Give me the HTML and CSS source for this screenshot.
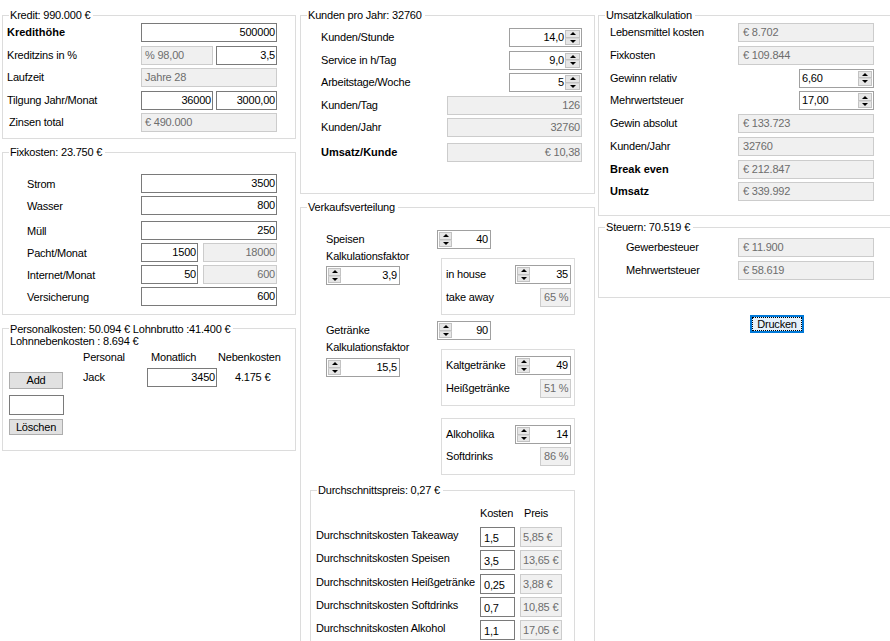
FILE: index.html
```html
<!DOCTYPE html>
<html lang="de">
<head>
<meta charset="utf-8">
<title>Kalkulation</title>
<link rel="stylesheet" href="styles.css">
</head>
<body>
<div class="app">
  <div class="col col1">
    <div class="group g-kredit">
      <span class="legend">Kredit: 990.000 €</span>
      <div class="row"><span class="lbl b">Kredithöhe</span><div class="tb full r">500000</div></div>
      <div class="row"><span class="lbl">Kreditzins in %</span><div class="tb dis s1">% 98,00</div><div class="tb r s2">3,5</div></div>
      <div class="row"><span class="lbl">Laufzeit</span><div class="tb dis full">Jahre 28</div></div>
      <div class="row"><span class="lbl">Tilgung Jahr/Monat</span><div class="tb r s1">36000</div><div class="tb r s2">3000,00</div></div>
      <div class="row"><span class="lbl ind">Zinsen total</span><div class="tb dis full">€ 490.000</div></div>
    </div>

    <div class="group g-fix">
      <span class="legend">Fixkosten: 23.750 €</span>
      <div class="row"><span class="lbl">Strom</span><div class="tb full r">3500</div></div>
      <div class="row"><span class="lbl">Wasser</span><div class="tb full r">800</div></div>
      <div class="row gap-more"><span class="lbl">Müll</span><div class="tb full r">250</div></div>
      <div class="row"><span class="lbl">Pacht/Monat</span><div class="tb r s1">1500</div><div class="tb dis r s2">18000</div></div>
      <div class="row"><span class="lbl">Internet/Monat</span><div class="tb r s1">50</div><div class="tb dis r s2">600</div></div>
      <div class="row"><span class="lbl">Versicherung</span><div class="tb full r">600</div></div>
    </div>

    <div class="group g-pers">
      <span class="legend two">Personalkosten: 50.094 € Lohnbrutto :41.400 €<br>Lohnnebenkosten : 8.694 €</span>
      <div class="pers-head"><span class="ph1">Personal</span><span class="ph2">Monatlich</span><span>Nebenkosten</span></div>
      <div class="pers-body">
        <div class="pers-ctrl">
          <div class="btn add">Add</div>
          <div class="tb empty"></div>
          <div class="btn del">Löschen</div>
        </div>
        <div class="row pers-row"><span class="lbl">Jack</span><div class="tb r">3450</div><span class="lbl neb">4.175 €</span></div>
      </div>
    </div>
  </div>

  <div class="col col2">
    <div class="group g-kunden">
      <span class="legend">Kunden pro Jahr: 32760</span>
      <div class="row"><span class="lbl wide">Kunden/Stunde</span><div class="ud"><span class="v">14,0</span><span class="spin"><i></i><i></i></span></div></div>
      <div class="row"><span class="lbl wide">Service in h/Tag</span><div class="ud"><span class="v">9,0</span><span class="spin"><i></i><i></i></span></div></div>
      <div class="row"><span class="lbl wide">Arbeitstage/Woche</span><div class="ud"><span class="v">5</span><span class="spin"><i></i><i></i></span></div></div>
      <div class="row"><span class="lbl">Kunden/Tag</span><div class="tb dis r">126</div></div>
      <div class="row"><span class="lbl">Kunden/Jahr</span><div class="tb dis r">32760</div></div>
      <div class="row last"><span class="lbl b">Umsatz/Kunde</span><div class="tb dis r">€ 10,38</div></div>
    </div>

    <div class="group g-verkauf">
      <span class="legend">Verkaufsverteilung</span>
      <div class="vk">
        <div class="row vk-main"><span class="lbl">Speisen</span><div class="ud lsp"><span class="v">40</span><span class="spin"><i></i><i></i></span></div></div>
        <div class="vk-pair">
          <div class="vk-left">
            <span class="lbl">Kalkulationsfaktor</span>
            <div class="ud lsp"><span class="v">3,9</span><span class="spin"><i></i><i></i></span></div>
          </div>
          <div class="panel">
            <div class="row"><span class="lbl">in house</span><div class="ud lsp"><span class="v">35</span><span class="spin"><i></i><i></i></span></div></div>
            <div class="row"><span class="lbl lp">take away</span><div class="tb dis r pct">65 %</div></div>
          </div>
        </div>

        <div class="row vk-main sec2"><span class="lbl">Getränke</span><div class="ud lsp"><span class="v">90</span><span class="spin"><i></i><i></i></span></div></div>
        <div class="vk-pair">
          <div class="vk-left k2">
            <span class="lbl">Kalkulationsfaktor</span>
            <div class="ud lsp"><span class="v">15,5</span><span class="spin"><i></i><i></i></span></div>
          </div>
          <div class="panel">
            <div class="row"><span class="lbl">Kaltgetränke</span><div class="ud lsp"><span class="v">49</span><span class="spin"><i></i><i></i></span></div></div>
            <div class="row"><span class="lbl lp">Heißgetränke</span><div class="tb dis r pct">51 %</div></div>
          </div>
        </div>
        <div class="panel solo">
          <div class="row"><span class="lbl">Alkoholika</span><div class="ud lsp"><span class="v">14</span><span class="spin"><i></i><i></i></span></div></div>
          <div class="row"><span class="lbl lp">Softdrinks</span><div class="tb dis r pct">86 %</div></div>
        </div>
      </div>

      <div class="group g-durch">
        <span class="legend">Durchschnittspreis: 0,27 €</span>
        <div class="dp-head"><span class="hk">Kosten</span><span>Preis</span></div>
        <div class="row dp"><span class="lbl">Durchschnitskosten Takeaway</span><div class="tb k">1,5</div><div class="tb dis p">5,85 €</div></div>
        <div class="row dp"><span class="lbl">Durchschnitskosten Speisen</span><div class="tb k">3,5</div><div class="tb dis p">13,65 €</div></div>
        <div class="row dp"><span class="lbl">Durchschnitskosten Heißgetränke</span><div class="tb k">0,25</div><div class="tb dis p">3,88 €</div></div>
        <div class="row dp"><span class="lbl">Durchschnitskosten Softdrinks</span><div class="tb k">0,7</div><div class="tb dis p">10,85 €</div></div>
        <div class="row dp"><span class="lbl">Durchschnitskosten Alkohol</span><div class="tb k">1,1</div><div class="tb dis p">17,05 €</div></div>
      </div>
    </div>
  </div>

  <div class="col col3">
    <div class="group g-umsatz">
      <span class="legend">Umsatzkalkulation</span>
      <div class="row"><span class="lbl">Lebensmittel kosten</span><div class="tb dis">€ 8.702</div></div>
      <div class="row"><span class="lbl">Fixkosten</span><div class="tb dis">€ 109.844</div></div>
      <div class="row"><span class="lbl wide">Gewinn relativ</span><div class="ud lt"><span class="v">6,60</span><span class="spin"><i></i><i></i></span></div></div>
      <div class="row"><span class="lbl wide">Mehrwertsteuer</span><div class="ud lt"><span class="v">17,00</span><span class="spin"><i></i><i></i></span></div></div>
      <div class="row"><span class="lbl">Gewin absolut</span><div class="tb dis">€ 133.723</div></div>
      <div class="row"><span class="lbl">Kunden/Jahr</span><div class="tb dis">32760</div></div>
      <div class="row"><span class="lbl b">Break even</span><div class="tb dis">€ 212.847</div></div>
      <div class="row"><span class="lbl b">Umsatz</span><div class="tb dis">€ 339.992</div></div>
    </div>

    <div class="group g-steuer">
      <span class="legend">Steuern: 70.519 €</span>
      <div class="row"><span class="lbl">Gewerbesteuer</span><div class="tb dis">€ 11.900</div></div>
      <div class="row"><span class="lbl">Mehrwertsteuer</span><div class="tb dis">€ 58.619</div></div>
    </div>

    <div class="btn-print"><span class="focus">Drucken</span></div>
  </div>
</div>
</body>
</html>
```

FILE: styles.css
```css
* { box-sizing: border-box; }
html, body { margin: 0; padding: 0; }
html { overflow: hidden; }
body {
  width: 890px;
  height: 641px;
  overflow: hidden;
  background: #fff;
  color: #000;
  font-family: "Liberation Sans", Arial, sans-serif;
  font-size: 11px;
  letter-spacing: -0.2px;
}

.app { display: flex; align-items: flex-start; }
.col { display: flex; flex-direction: column; align-items: flex-start; flex: none; }
.col1 { margin-left: 2px; width: 294px; }
.col2 { margin-left: 4px; width: 295px; }
.col3 { margin-left: 3px; width: 292px; }

/* group boxes */
.group {
  position: relative;
  flex: none;
  width: 100%;
  border: 1px solid #dcdcdc;
  display: flex;
  flex-direction: column;
  align-items: flex-start;
}
.col3 .group { border-right: 0; }
.legend {
  position: absolute;
  top: -7px;
  left: 6px;
  padding: 0 3px 0 1px;
  background: #fff;
  line-height: 13px;
  white-space: nowrap;
}
.legend.two { top: -6px; line-height: 12px; }

/* generic controls */
.row { display: flex; align-items: center; height: 19px; flex: none; }
.lbl { flex: none; line-height: 13px; white-space: nowrap; }
.b { font-weight: bold; letter-spacing: 0; }

.tb {
  flex: none;
  height: 19px;
  border: 1px solid #7a7a7a;
  background: #fff;
  padding: 0 1px 0 3px;
  line-height: 17px;
  white-space: nowrap;
  overflow: hidden;
}
.tb.r { text-align: right; }
.tb.dis { background: #f0f0f0; border-color: #cccccc; color: #6d6d6d; }

.ud {
  flex: none;
  display: flex;
  height: 19px;
  border: 1px solid #a0a0a0;
  background: #fff;
}
.ud .v { flex: 1; text-align: right; line-height: 17px; padding-right: 1px; white-space: nowrap; }
.spin {
  flex: none;
  width: 15px;
  margin: 1px 1px 1px 0;
  display: flex;
  flex-direction: column;
}
.spin i {
  flex: 1;
  display: flex;
  align-items: center;
  justify-content: center;
  background: #e6e6e6;
  border: 1px solid #c2c2c2;
}
.spin i + i { border-top-color: #d6d6d6; }
.spin i:first-child::after {
  content: "";
  border-left: 3px solid transparent;
  border-right: 3px solid transparent;
  border-bottom: 3px solid #000;
}
.spin i:last-child::after {
  content: "";
  border-left: 3px solid transparent;
  border-right: 3px solid transparent;
  border-top: 3px solid #000;
}
.ud.lsp .spin { order: -1; width: 13px; margin: 1px 0 1px 1px; }
.ud.lsp .v { padding-right: 2px; }
.ud.lt .v { text-align: left; padding-left: 2px; }
.ud.lt .spin { width: 14px; }

.btn {
  flex: none;
  width: 54px;
  height: 17px;
  background: #e1e1e1;
  border: 1px solid #adadad;
  text-align: center;
  line-height: 15px;
}

/* Kredit */
.g-kredit { margin-top: 15px; height: 124px; padding: 7px 0 0 4px; gap: 3.5px; }
.g-kredit .lbl { width: 134px; }
.g-kredit .lbl.ind { padding-left: 2px; }
.full { width: 136px; }
.g-kredit .s1 { width: 72px; }
.g-kredit .s2 { width: 61px; margin-left: 3px; }

/* Fixkosten */
.g-fix { margin-top: 13px; height: 163px; padding: 21px 0 0 24px; gap: 3px; }
.g-fix .lbl { width: 114px; padding-top: 2px; }
.g-fix .gap-more { margin-top: 3px; }
.g-fix .s1 { width: 57px; }
.g-fix .s2 { width: 74px; margin-left: 5px; }

/* Personal */
.g-pers { margin-top: 13px; height: 123px; padding-top: 22px; }
.pers-head { display: flex; padding-left: 80px; line-height: 13px; white-space: nowrap; }
.pers-head .ph1 { width: 68px; }
.pers-head .ph2 { width: 67px; }
.pers-body { display: flex; align-items: flex-start; margin-top: 4px; padding-left: 6px; }
.pers-ctrl { width: 56px; display: flex; flex-direction: column; align-items: flex-start; }
.pers-ctrl .add { margin-top: 4px; }
.pers-ctrl .empty { margin-top: 6px; width: 55px; height: 20px; }
.pers-ctrl .del { margin-top: 4px; height: 16px; line-height: 14px; }
.pers-row { margin-left: 18px; }
.pers-row .lbl { width: 64px; }
.pers-row .tb { width: 70px; }
.pers-row .neb { width: auto; margin-left: 18px; }

/* Kunden */
.g-kunden { margin-top: 15px; height: 179px; padding: 12px 0 0 20px; gap: 3.5px; }
.g-kunden .lbl { width: 126px; }
.g-kunden .lbl.wide { width: 188px; }
.g-kunden .ud { width: 73px; }
.g-kunden .tb { width: 135px; }
.g-kunden .last { margin-top: 2.5px; }

/* Verkaufsverteilung */
.g-verkauf { margin-top: 13px; height: 470px; }
.vk { display: flex; flex-direction: column; align-items: flex-start; padding: 22px 0 0 25px; }
.vk-main .lbl { width: 111px; }
.vk-main .ud { width: 54px; }
.vk-main.sec2 { margin-top: 6px; }
.vk-pair { display: flex; align-items: flex-start; margin-top: 1px; }
.vk-left { width: 115px; flex: none; display: flex; flex-direction: column; align-items: flex-start; }
.vk-left .ud { width: 74px; margin-top: 3px; }
.vk-left.k2 .ud { margin-top: 4px; }
.panel {
  flex: none;
  width: 134px;
  height: 57px;
  margin-top: 8px;
  border: 1px solid #dcdcdc;
  padding: 6px 0 0 4px;
  display: flex;
  flex-direction: column;
  gap: 4px;
}
.panel .lbl { width: 69px; }
.panel .lbl.lp { width: 94px; }
.panel .ud { width: 56px; }
.panel .pct { width: 31px; padding-right: 2px; }
.panel.solo { margin-top: 12px; margin-left: 115px; gap: 3px; }

/* Durchschnittspreis */
.g-durch { margin: 15px 0 0 9px; width: 265px; height: 200px; padding-top: 16px; }
.dp-head { display: flex; padding-left: 169px; line-height: 13px; }
.dp-head .hk { width: 44px; }
.g-durch .dp { height: 20px; margin-top: 3.25px; padding-left: 5px; }
.g-durch .dp-head + .dp { margin-top: 7px; }
.g-durch .dp .lbl { width: 164px; margin-top: -3px; }
.g-durch .tb { height: 20px; line-height: 21px; }
.g-durch .tb.k { width: 35px; padding-left: 3px; }
.g-durch .tb.p { width: 42px; margin-left: 5px; padding-left: 2px; line-height: 18px; }

/* Umsatzkalkulation */
.g-umsatz { margin-top: 15px; height: 201px; padding: 7px 0 0 11px; gap: 3.75px; }
.g-umsatz .lbl { width: 128px; }
.g-umsatz .lbl.wide { width: 189px; }
.g-umsatz .tb { width: 136px; padding-left: 4px; }
.g-umsatz .ud { width: 75px; }

/* Steuern */
.g-steuer { margin-top: 11px; height: 71px; padding: 10px 0 0 27px; gap: 4px; }
.g-steuer .lbl { width: 112px; }
.g-steuer .tb { width: 136px; padding-left: 4px; }

/* Drucken */
.btn-print {
  flex: none;
  margin: 17px 0 0 152px;
  width: 54px;
  height: 18px;
  border: 2px solid #0078d7;
  background: #e5f1fb;
  padding: 0;
}
.btn-print .focus {
  display: block;
  height: 14px;
  border: 1px dotted #000;
  text-align: center;
  line-height: 13px;
}
```
